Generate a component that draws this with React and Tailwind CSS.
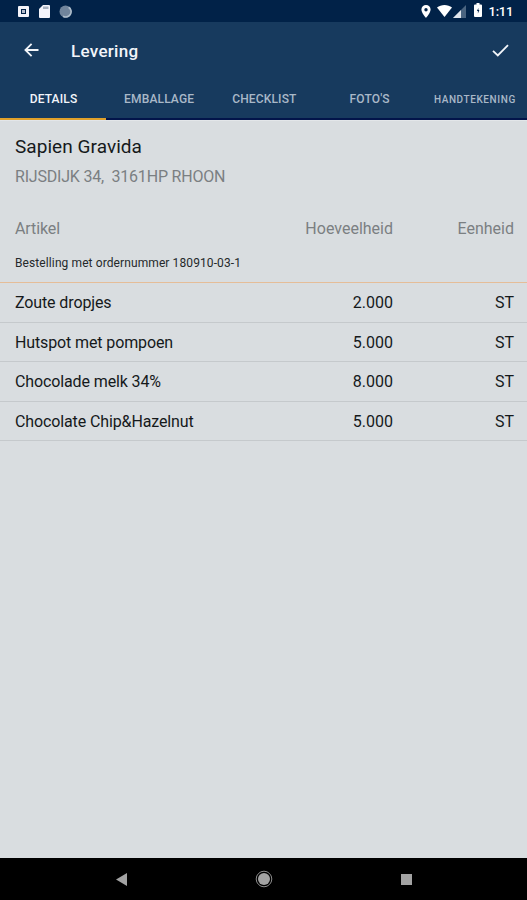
const tabs = [
  { label: 'DETAILS', active: true },
  { label: 'EMBALLAGE' },
  { label: 'CHECKLIST' },
  { label: "FOTO'S" },
  { label: 'HANDTEKENING', small: true },
];

const items = [
  { name: 'Zoute dropjes', amount: '2.000', unit: 'ST' },
  { name: 'Hutspot met pompoen', amount: '5.000', unit: 'ST' },
  { name: 'Chocolade melk 34%', amount: '8.000', unit: 'ST' },
  { name: 'Chocolate Chip&Hazelnut', amount: '5.000', unit: 'ST' },
];

function StatusBar() {
  return (
    <div className="flex h-[22px] shrink-0 items-center justify-between bg-[#012248] pl-[18px] pr-[14px] text-white">
      <div className="flex items-center gap-[10px]">
        <svg width="11" height="11" viewBox="0 0 11 11">
          <path fill="#f4f4fa" fillRule="evenodd" d="M1 0h9a1 1 0 0 1 1 1v9a1 1 0 0 1-1 1H1a1 1 0 0 1-1-1V1a1 1 0 0 1 1-1zM3 3v5h5V3z" />
          <rect x="4" y="4" width="3" height="3" fill="#b4bccb" />
        </svg>
        <svg width="11" height="13" viewBox="0 0 11 13">
          <path fill="#f4f4fa" d="M4 0h6a1 1 0 0 1 1 1v11a1 1 0 0 1-1 1H1a1 1 0 0 1-1-1V4z" />
          <path fill="#a9b2c0" d="M4 1.500h5.500V4H4z" />
        </svg>
        <svg width="13" height="13" viewBox="0 0 13 13" className="-ml-px">
          <circle cx="6.5" cy="6.5" r="6" fill="#71859c" />
          <path fill="none" stroke="#aebdcb" strokeWidth="1.6" d="M9.6 2.2A5.2 5.2 0 0 1 4 11.2" />
        </svg>
      </div>
      <div className="flex items-center">
        <svg width="10" height="13" viewBox="0 0 10 13">
          <path fill="#fff" fillRule="evenodd" d="M5 0a4.6 4.6 0 0 1 4.6 4.6C9.6 8 5 13 5 13S.4 8 .4 4.6A4.6 4.6 0 0 1 5 0zm0 3a1.7 1.7 0 1 0 0 3.4A1.7 1.7 0 0 0 5 3z" />
        </svg>
        <svg width="15" height="12" viewBox="0 0 15 12" className="ml-[6px]">
          <path fill="#fff" d="M7.5 12 0 2.6C4-.8 11-.8 15 2.6z" />
        </svg>
        <svg width="13" height="13" viewBox="0 0 13 13" className="ml-px">
          <path fill="#4a6480" d="M13 0v13H0z" />
          <path fill="#dfe5ec" d="M8 5v8H0z" />
        </svg>
        <svg width="8" height="14" viewBox="0 0 8 14" className="-mt-[2px] ml-[8px]">
          <path fill="#fff" d="M2.5 0h3v1.5H7a1 1 0 0 1 1 1V13a1 1 0 0 1-1 1H1a1 1 0 0 1-1-1V2.500a1 1 0 0 1 1-1h1.500z" />
          <path fill="#012248" d="M4.400 5 2.900 8h1v2.500l1.500-3.500h-1z" />
        </svg>
        <span className="ml-[7px] text-[13px] font-medium leading-none -tracking-[0.3px]">1:11</span>
      </div>
    </div>
  );
}

function Header() {
  return (
    <header className="flex h-[56px] shrink-0 items-center pl-[24px] pr-[18px] text-[#f2f5fa]">
      <svg width="15" height="14" viewBox="0 0 15 14" fill="none" stroke="currentColor" strokeWidth="1.8">
        <path d="M14.500 7H2M7.600 .8 1.400 7l6.200 6.200" />
      </svg>
      <h1 className="ml-[32px] pt-[2px] text-[17px] font-medium leading-none tracking-[0.3px]">Levering</h1>
      <svg width="17" height="13" viewBox="0 0 17 13" fill="none" stroke="currentColor" strokeWidth="1.8" className="ml-auto">
        <path d="m1 6.800 4.800 4.700L16 1.200" />
      </svg>
    </header>
  );
}

function Tabs() {
  return (
    <nav className="grid h-[42px] shrink-0 grid-cols-[106px_repeat(4,1fr)]">
      {tabs.map(({ label, active, small }) => (
        <div
          key={label}
          className={`flex items-center justify-center whitespace-nowrap border-b-2 pl-px pt-[2px] font-medium ${
            active ? 'border-[#e0a12b] text-[#f2f5fa]' : 'border-[#02144a] text-[#a9b8c8]'
          } ${small ? 'text-[10px] tracking-[0.6px]' : 'text-[12px] tracking-[0.15px]'}`}
        >
          {label}
        </div>
      ))}
    </nav>
  );
}

function Row({ name, amount, unit }) {
  return (
    <div className="flex h-[39.600px] items-center border-b border-[#c5c9cc] pl-[15px] pr-[13px] pt-[2px] text-[16px] text-[#15191b]">
      <span className="flex-1 -tracking-[0.12px]">{name}</span>
      <span className="w-[100px] text-right">{amount}</span>
      <span className="w-[121px] text-right">{unit}</span>
    </div>
  );
}

function NavBar() {
  return (
    <div className="flex h-[42px] shrink-0 items-center justify-between bg-black pl-[116px] pr-[115px]">
      <svg width="11" height="13" viewBox="0 0 11 13"><path fill="#a3a3a3" d="M11 0v13L0 6.500z" /></svg>
      <svg width="18" height="18" viewBox="0 0 18 18">
        <circle cx="9" cy="9" r="7.800" fill="none" stroke="#8c8c8c" strokeWidth="1" />
        <circle cx="9" cy="9" r="6" fill="#a3a3a3" />
      </svg>
      <div className="size-[11px] bg-[#a3a3a3]" />
    </div>
  );
}

export default function App() {
  return (
    <div className="flex h-[900px] w-[527px] flex-col overflow-hidden bg-[#d9dde0] font-['Roboto',sans-serif]">
      <StatusBar />
      <div className="bg-[#173a5e]">
        <Header />
        <Tabs />
      </div>
      <main className="flex-1">
        <div className="h-[162px] border-t border-[#e3e6e9] pl-[15px] pr-[13px]">
          <h2 className="pt-[13px] text-[19px] leading-[26px] tracking-[0.05px] text-[#15191b]">Sapien Gravida</h2>
          <p className="mt-[7px] whitespace-pre text-[16px] leading-[20px] -tracking-[0.2px] text-[#7b7f82]">RIJSDIJK 34,  3161HP RHOON</p>
          <div className="mt-[32px] flex text-[16px] leading-[20px] text-[#7b7f82]">
            <span className="flex-1 -tracking-[0.1px]">Artikel</span>
            <span className="w-[100px] text-right">Hoeveelheid</span>
            <span className="w-[121px] text-right">Eenheid</span>
          </div>
          <p className="mt-[16px] text-[12px] leading-[16px] tracking-[0.1px] text-[#25292b]">Bestelling met ordernummer 180910-03-1</p>
        </div>
        <div className="border-t border-[#e5bd98]">
          {items.map((item) => (
            <Row key={item.name} {...item} />
          ))}
        </div>
      </main>
      <NavBar />
    </div>
  );
}
